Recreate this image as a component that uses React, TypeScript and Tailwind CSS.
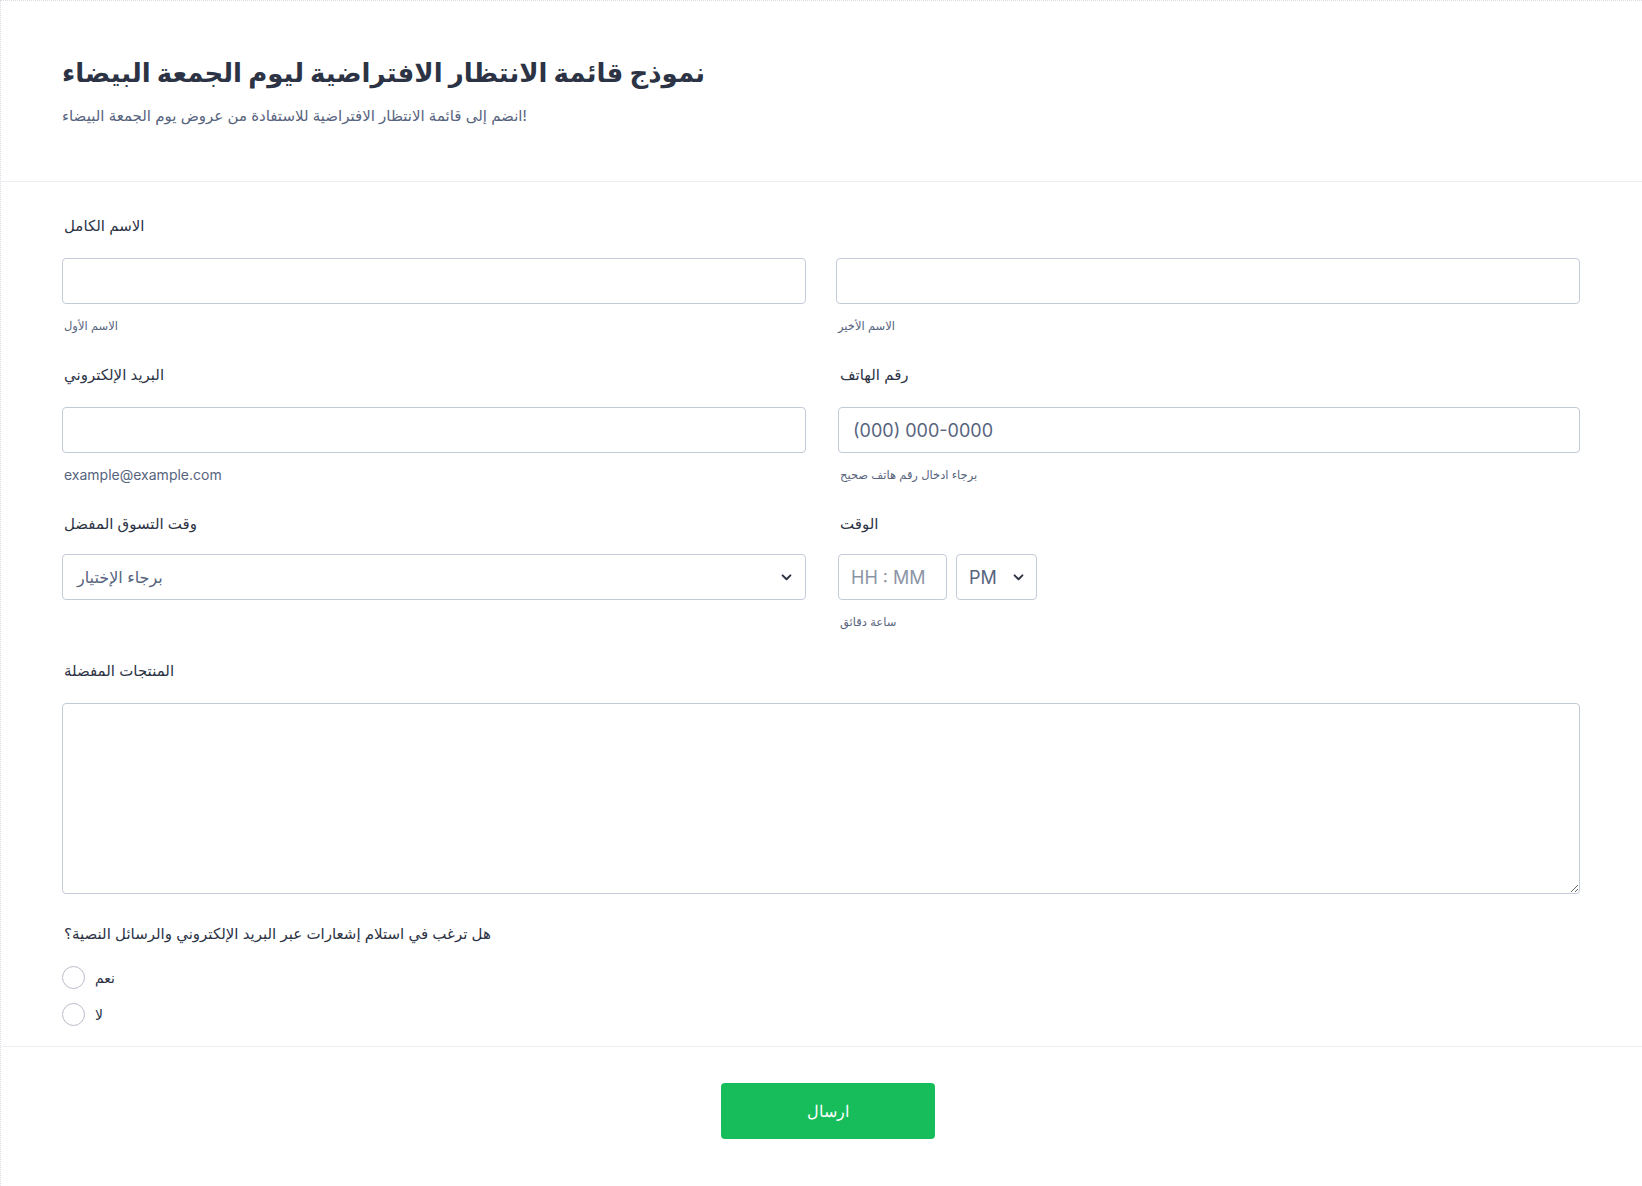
import {useState} from "react";

const Chevron = ({className}: {className?: string}) => (
    <svg className={className} width="11" height="7" viewBox="0 0 12 8" fill="none">
        <path d="M1.5 1.5L6 6L10.5 1.5" stroke="#2c3345" strokeWidth="2.2" strokeLinecap="round" strokeLinejoin="round"/>
    </svg>
);

const inputClass = "block w-full h-[46px] rounded-[4px] border border-[#c3cad8] bg-white px-[14px] text-[18px] text-[#2c3345] placeholder:text-[#57647e] outline-none";

const Label = ({children}: {children: React.ReactNode}) => (
    <div className="h-5 pl-[2px] text-[15px] leading-5 text-[#2c3345]">{children}</div>
);

const SubLabel = ({children, latin}: {children: React.ReactNode; latin?: boolean}) => (
    <div className={`mt-[14px] h-4 pl-[2px] leading-4 text-[#57647e] ${latin ? "text-[14px]" : "text-[11.5px]"}`}>{children}</div>
);

const App = () => {
    const [notify, setNotify] = useState<string>("");

    return (
        <div className="min-h-[1186px] w-full bg-white font-['Inter','DejaVu_Sans',sans-serif] border-l border-t border-dotted border-[#d9dce3]">
            {/* header */}
            <div className="border-b border-[#eceef2] pl-[61px] pr-[62px] pt-[52px] pb-[55px]">
                <h1 className="h-10 text-[26px] font-bold leading-10 text-[#2c3345]">
                    نموذج قائمة الانتظار الافتراضية ليوم الجمعة البيضاء
                </h1>
                <p className="mt-[13px] h-5 text-[15px] leading-5 text-[#57647e]">
                    انضم إلى قائمة الانتظار الافتراضية للاستفادة من عروض يوم الجمعة البيضاء!
                </p>
            </div>

            {/* fields */}
            <div className="pl-[61px] pr-[62px] pt-[34px]">
                <div className="flex flex-col gap-[31px]">
                    <div>
                        <Label>الاسم الكامل</Label>
                        <div className="mt-[22px] grid grid-cols-2 gap-[30px]">
                            <div>
                                <input className={inputClass}/>
                                <SubLabel>الاسم الأول</SubLabel>
                            </div>
                            <div>
                                <input className={inputClass}/>
                                <SubLabel>الاسم الأخير</SubLabel>
                            </div>
                        </div>
                    </div>

                    <div className="grid grid-cols-2 gap-[30px]">
                        <div>
                            <Label>البريد الإلكتروني</Label>
                            <input className={`mt-[22px] ${inputClass}`}/>
                            <SubLabel latin>example@example.com</SubLabel>
                        </div>
                        <div className="pl-[2px]">
                            <Label>رقم الهاتف</Label>
                            <input className={`mt-[22px] ${inputClass}`} placeholder="(000) 000-0000"/>
                            <SubLabel>برجاء ادخال رقم هاتف صحيح</SubLabel>
                        </div>
                    </div>

                    <div className="grid grid-cols-2 gap-[30px]">
                        <div>
                            <Label>وقت التسوق المفضل</Label>
                            <div className="mt-[20px] flex h-[46px] items-center justify-between rounded-[4px] border border-[#c3cad8] bg-white pl-[14px] pr-[13px]">
                                <span className="text-[16px] text-[#57647e]">برجاء الإختيار</span>
                                <Chevron/>
                            </div>
                        </div>
                        <div className="pl-[2px]">
                            <Label>الوقت</Label>
                            <div className="mt-[20px] flex gap-[9px]">
                                <div className="flex h-[46px] w-[109px] items-center rounded-[4px] border border-[#c3cad8] px-[12px] text-[18px] text-[#8c94a5]">
                                    HH : MM
                                </div>
                                <div className="flex h-[46px] w-[81px] items-center justify-between rounded-[4px] border border-[#c3cad8] pl-[12px] pr-[12px] text-[18px] text-[#57647e]">
                                    PM
                                    <Chevron/>
                                </div>
                            </div>
                            <SubLabel>ساعة دقائق</SubLabel>
                        </div>
                    </div>

                    <div>
                        <Label>المنتجات المفضلة</Label>
                        <textarea className="mt-[22px] block h-[191px] w-full rounded-[4px] border border-[#c3cad8] bg-white p-3 outline-none"/>
                    </div>
                </div>

                <div className="mt-[30px]">
                    <Label>هل ترغب في استلام إشعارات عبر البريد الإلكتروني والرسائل النصية؟</Label>
                    <div className="mt-[22px] flex flex-col gap-[14px]">
                        {["نعم", "لا"].map((opt) => (
                            <label key={opt} className="flex h-[23px] items-center gap-[10px]">
                                <input
                                    type="radio"
                                    name="notify"
                                    checked={notify === opt}
                                    onChange={() => setNotify(opt)}
                                    className="h-[23px] w-[23px] appearance-none rounded-full border-[1.5px] border-[#b8bdc9] bg-white checked:border-[6px] checked:border-[#18bd5b]"
                                />
                                <span className="text-[14px] text-[#2c3345]">{opt}</span>
                            </label>
                        ))}
                    </div>
                </div>
            </div>

            {/* footer */}
            <div className="mt-[20px] border-t border-[#eceef2] pt-[36px] pb-[47px]">
                <div className="flex justify-center pl-[12px]">
                    <button className="h-[56px] w-[214px] rounded-[4px] bg-[#18bd5b] text-[16px] font-light text-white">
                        ارسال
                    </button>
                </div>
            </div>
        </div>
    );
};

export default App;
